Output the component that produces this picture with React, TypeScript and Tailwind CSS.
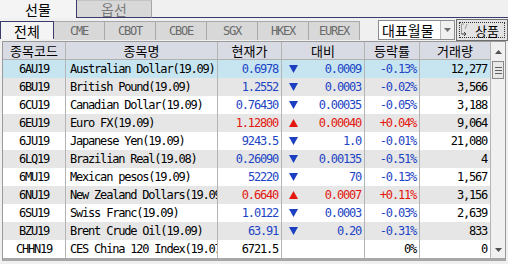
import React from "react";

type Dir = "up" | "down" | null;

interface QuoteRow {
  code: string;
  name: string;
  price: string;
  dir: Dir;
  change: string;
  rate: string;
  volume: string;
}

const rows: QuoteRow[] = [
  { code: "6AU19", name: "Australian Dollar(19.09)", price: "0.6978", dir: "down", change: "0.0009", rate: "-0.13%", volume: "12,277" },
  { code: "6BU19", name: "British Pound(19.09)", price: "1.2552", dir: "down", change: "0.0003", rate: "-0.02%", volume: "3,566" },
  { code: "6CU19", name: "Canadian Dollar(19.09)", price: "0.76430", dir: "down", change: "0.00035", rate: "-0.05%", volume: "3,188" },
  { code: "6EU19", name: "Euro FX(19.09)", price: "1.12800", dir: "up", change: "0.00040", rate: "+0.04%", volume: "9,064" },
  { code: "6JU19", name: "Japanese Yen(19.09)", price: "9243.5", dir: "down", change: "1.0", rate: "-0.01%", volume: "21,080" },
  { code: "6LQ19", name: "Brazilian Real(19.08)", price: "0.26090", dir: "down", change: "0.00135", rate: "-0.51%", volume: "4" },
  { code: "6MU19", name: "Mexican pesos(19.09)", price: "52220", dir: "down", change: "70", rate: "-0.13%", volume: "1,567" },
  { code: "6NU19", name: "New Zealand Dollars(19.09)", price: "0.6640", dir: "up", change: "0.0007", rate: "+0.11%", volume: "3,156" },
  { code: "6SU19", name: "Swiss Franc(19.09)", price: "1.0122", dir: "down", change: "0.0003", rate: "-0.03%", volume: "2,639" },
  { code: "BZU19", name: "Brent Crude Oil(19.09)", price: "63.91", dir: "down", change: "0.20", rate: "-0.31%", volume: "833" },
  { code: "CHHN19", name: "CES China 120 Index(19.07)", price: "6721.5", dir: null, change: "", rate: "0%", volume: "0" },
];

const exchanges = ["CME", "CBOT", "CBOE", "SGX", "HKEX", "EUREX"];
const headers = ["종목코드", "종목명", "현재가", "대비", "등락률", "거래량"];

const mono = "font-['DejaVu_Sans_Mono','Noto_Sans_CJK_KR',monospace] text-[12px] tracking-[-1.2px]";
const kr = "font-['Noto_Sans_CJK_KR','DejaVu_Sans',sans-serif] leading-none";

function Triangle({ dir }: { dir: Dir }) {
  if (!dir) return <span />;
  return (
    <svg width="9" height="8" viewBox="0 0 9 8">
      {dir === "down" ? (
        <polygon points="0,0 9,0 4.5,8" fill="#1d3fc2" />
      ) : (
        <polygon points="4.5,0 9,8 0,8" fill="#e3170f" />
      )}
    </svg>
  );
}

function colorFor(dir: Dir) {
  if (dir === "down") return "text-[#1d44c4]";
  if (dir === "up") return "text-[#e3170f]";
  return "text-black";
}

export default function App() {
  return (
    <div className="w-[508px] h-[264px] overflow-hidden bg-[#f0f0f0] select-none">
      {/* market tabs */}
      <div className="flex h-[18px]">
        <div className={`w-[77px] flex items-center justify-center bg-[#f4f4f4] border-r border-[#3b3b6b] text-[14px] text-black ${kr}`}>
          선물
        </div>
        <div className={`w-[75px] flex items-center justify-center bg-[#d8d8d8] border-t border-r border-t-[#c4c4c4] border-r-[#a4a4a4] border-b border-b-[#3b3b6b] text-[14px] text-[#7a7a7a] ${kr}`}>
          옵선
        </div>
        <div className="flex-1 border-b border-[#3b3b6b]" />
      </div>

      {/* exchange tabs + controls */}
      <div className="flex h-[23px]">
        <div className="flex mt-[3px] h-[18px] w-[360px]">
          <div className={`w-[54px] flex items-center justify-center bg-[#f4f4f4] border-t border-l border-r border-[#3b3b6b] text-[14px] text-black ${kr}`}>
            전체
          </div>
          {exchanges.map((ex) => (
            <div key={ex} className="w-[51px] flex flex-col border-b border-[#3b3b6b]">
              <div className={`flex-1 flex items-center justify-center bg-[#d8d8d8] border-t border-r border-[#a8a8a8] text-[#6a6a6a] ${mono}`}>
                {ex}
              </div>
            </div>
          ))}
        </div>
        <div className="ml-[18px] mt-[2px] h-[20px] w-[77px] flex bg-white border border-[#8c8c8c]">
          <div className={`flex-1 flex items-center pl-[3px] text-[14px] text-black ${kr}`}>대표월물</div>
          <div className="w-[14px] flex items-center justify-center bg-[#f0f0f0] border-l border-[#b8b8b8]">
            <svg width="7" height="4" viewBox="0 0 7 4">
              <polygon points="0,0 7,0 3.5,4" fill="#707070" />
            </svg>
          </div>
        </div>
        <div className="ml-[1px] mt-[1px] h-[22px] w-[52px] p-[2px] bg-[#e4e4e4] border border-[#6e6e6e]">
          <div className="h-full flex items-center border border-dotted border-[#303030] whitespace-nowrap">
            <svg width="10" height="14" viewBox="0 0 10 14" className="shrink-0">
              <path d="M1.5 1 L1.5 11 M1.5 1 L4 1 M7 1 L5 6" stroke="#9a9a9a" strokeWidth="1" fill="none" />
              <path d="M1.5 11 L6 11 M4 9 L6 11 L4 13" stroke="#404040" strokeWidth="1" fill="none" />
            </svg>
            <span className={`ml-[5px] text-[13px] text-black ${kr}`}>상품</span>
          </div>
        </div>
      </div>

      {/* quote table */}
      <div className="mx-[2px] flex border border-[#9a9a9a] border-b-[3px] border-b-[#a8a8a8]">
        <div className="w-[488px]">
          <div className="grid grid-cols-[63px_152px_64px_83px_55px_71px] h-[18px] bg-[#d8dbe4] border-b border-[#b0b0b0]">
            {headers.map((h) => (
              <div key={h} className={`flex items-center justify-center border-r border-[#b4b4b4] text-[13px] text-black ${kr}`}>
                {h}
              </div>
            ))}
          </div>
          {rows.map((r, i) => {
            const bg = i === 0 ? "bg-[#c7e5f1]" : i % 2 === 1 ? "bg-[#e6e6e6]" : "bg-white";
            const c = colorFor(r.dir);
            return (
              <div key={r.code} className={`grid grid-cols-[63px_152px_64px_83px_55px_71px] h-[18px] ${bg} ${mono}`}>
                <div className="flex items-center justify-center border-r border-[#b4b4b4] text-black">{r.code}</div>
                <div className="flex items-center pl-[4px] border-r border-[#b4b4b4] text-black overflow-hidden whitespace-nowrap">{r.name}</div>
                <div className={`flex items-center justify-end pr-[3px] border-r border-[#b4b4b4] ${c}`}>{r.price}</div>
                <div className={`flex items-center justify-between pl-[7px] pr-[3px] border-r border-[#b4b4b4] ${c}`}>
                  <Triangle dir={r.dir} />
                  <span>{r.change}</span>
                </div>
                <div className={`flex items-center justify-end pr-[3px] border-r border-[#b4b4b4] ${c}`}>{r.rate}</div>
                <div className="flex items-center justify-end pr-[3px] border-r border-[#b4b4b4] text-black">{r.volume}</div>
              </div>
            );
          })}
        </div>
        {/* scrollbar */}
        <div className="w-[15px] flex flex-col bg-[#f0f0f0]">
          <div className="h-[19px] flex items-center justify-center">
            <svg width="7" height="4" viewBox="0 0 7 4">
              <polygon points="3.5,0 7,4 0,4" fill="#505050" />
            </svg>
          </div>
          <div className="h-[18px] mx-[1px] flex flex-col items-center justify-center gap-[2px] bg-[#e8e8e8] border border-[#8a8a8a]">
            <div className="w-[7px] h-px bg-[#606060]" />
            <div className="w-[7px] h-px bg-[#606060]" />
            <div className="w-[7px] h-px bg-[#606060]" />
          </div>
          <div className="flex-1" />
          <div className="h-[17px] flex items-center justify-center">
            <svg width="7" height="4" viewBox="0 0 7 4">
              <polygon points="0,0 7,0 3.5,4" fill="#505050" />
            </svg>
          </div>
        </div>
      </div>
    </div>
  );
}
